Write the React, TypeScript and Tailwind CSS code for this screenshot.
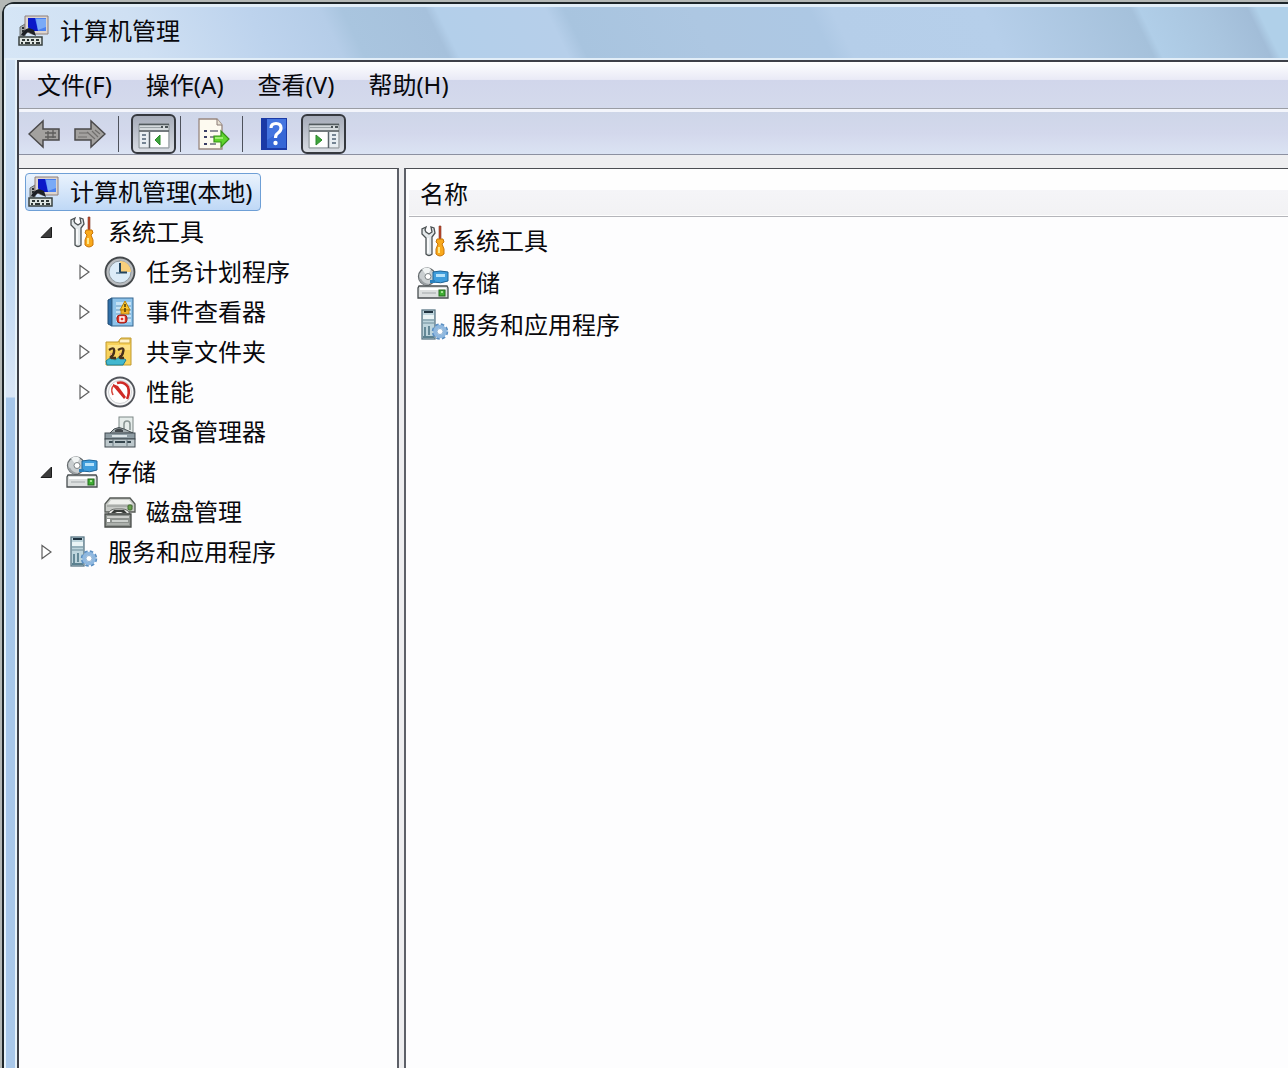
// Computer management console: menu bar, toolbar, console tree and result list.

import type { ComponentType, ReactNode } from 'react';

/* ---------- Icons ---------- */

function ComputerIcon() {
    return (
        <svg width="32" height="32" viewBox="0 0 32 32" aria-hidden="true">
            <path d="M2 12l5-3v12H2z" fill="#a9aeb0" stroke="#6d7274" />
            <path d="M7 1h23v18H14l-7-3z" fill="#ddd5cf" stroke="#8c7f7b" />
            <path d="M10 3h18v13H14l-4-3z" fill="#4a80f0" />
            <path d="M10 3h7l3 13h-6l-4-4z" fill="#0a18c8" />
            <path d="M18 4h10v8l-8 3z" fill="#86b4f8" opacity=".8" />
            <path d="M3 20c2-4 4-6 8-7l5 2 2 6-4-2-4-2-4 4z" fill="#1d2026" />
            <path d="M4 13h2M4 16h2" stroke="#2c3032" strokeWidth="2" />
            <rect x="1" y="22" width="23" height="8" fill="#dfe5e2" stroke="#38403f" strokeWidth="1.500" />
            <path d="M4 25h3m2 0h2m2 0h3m2 0h3M3 28h2m2 0h5m2 0h2m2 0h4" stroke="#2f3736" strokeWidth="1.800" />
        </svg>
    );
}

function ToolsIcon() {
    return (
        <svg width="32" height="32" viewBox="0 0 32 32" aria-hidden="true">
            <path d="M9 2L5 4v5l4 4v16q3 3 6 0V12l3-4-1-5-3-1 1 5-3 2-3-2-1-2z" fill="#e3e8ea" stroke="#4c5254" strokeWidth="1.300" />
            <path d="M11 13v15" stroke="#fff" strokeWidth="1.500" />
            <path d="M22 1h2v14h-2z" fill="#c4472a" stroke="#7b3a2a" strokeWidth=".6" />
            <path d="M20 14h6l1 3-2 2 2 5v5q-4 4-8 0v-5l2-5-2-2z" fill="#f9a91c" stroke="#c97608" />
            <path d="M22 22v6" stroke="#ffe98a" strokeWidth="2" />
        </svg>
    );
}

function ClockIcon() {
    return (
        <svg width="32" height="32" viewBox="0 0 32 32" aria-hidden="true">
            <circle cx="16" cy="16" r="14.500" fill="#b9bcbf" stroke="#45494c" strokeWidth="1.800" />
            <circle cx="16" cy="16" r="11" fill="#dcecf8" stroke="#8f989e" />
            <path d="M16 16V5a11 11 0 0 1 11 11z" fill="#f8cf7c" />
            <path d="M16 7v9.500h7" fill="none" stroke="#23445e" strokeWidth="2" />
            <path d="M12 17h4" stroke="#5d7f99" strokeWidth="1.500" />
        </svg>
    );
}

function EventIcon() {
    return (
        <svg width="32" height="32" viewBox="0 0 32 32" aria-hidden="true">
            <path d="M4 4l4-2v28l-4-2z" fill="#2f6fa8" stroke="#204a72" />
            <rect x="8" y="2" width="21" height="28" fill="#8ec3ea" stroke="#35668f" />
            <path d="M12 6h15v20H12z" fill="#c5e2f5" />
            <path d="M12 10h15m-15 4h15m-15 4h15m-15 4h15" stroke="#5f96c2" />
            <path d="M21 5l5 9H16z" fill="#fbc62d" stroke="#b57f08" />
            <path d="M17 14h8v4h-8z" fill="#f3b22a" stroke="#b57f08" strokeWidth=".8" />
            <path d="M21 8v3m0 1v4" stroke="#4b3904" strokeWidth="1.500" />
            <rect x="13" y="19" width="10" height="8" rx="3" fill="#e03427" stroke="#9f1b16" />
            <path d="M16 21h4v4h-4z" fill="#e03427" stroke="#fff" strokeWidth="1.400" />
        </svg>
    );
}

function SharedFolderIcon() {
    return (
        <svg width="32" height="32" viewBox="0 0 32 32" aria-hidden="true">
            <path d="M2 6h12l3-4h10v27H2z" fill="#f8d25b" stroke="#c09a31" />
            <path d="M16 3h10v4H15z" fill="#fff3cc" stroke="#cda73c" />
            <path d="M4 9h22v5H4z" fill="#fde388" />
            <path d="M2 25q5-5 9-1 5-5 11 0l-3 5H3z" fill="#42b8cf" stroke="#1e7f95" />
            <path d="M5 14q6-4 5 2 0 3-4 6m1 0h5M14 14q7-4 5 2 0 3-4 6m1 0h4" fill="none" stroke="#47301a" strokeWidth="2.400" />
            <path d="M6 18h2m7 0h2" stroke="#e9a877" strokeWidth="2" />
        </svg>
    );
}

function PerformanceIcon() {
    return (
        <svg width="32" height="32" viewBox="0 0 32 32" aria-hidden="true">
            <circle cx="16" cy="16" r="14.500" fill="#f7f7f8" stroke="#53565c" strokeWidth="1.800" />
            <circle cx="16" cy="16" r="11.500" fill="#fff" stroke="#cfd1d4" />
            <path d="M9 19q-3-6 1-10" fill="none" stroke="#d8493f" strokeWidth="1.600" />
            <path d="M9 8l5 2 8 11-2 2L9 10z" fill="#cf2a25" />
            <path d="M13 7q7-2 11 4 2 6-1 12" fill="none" stroke="#cf2a25" strokeWidth="2.600" />
        </svg>
    );
}

function DeviceIcon() {
    return (
        <svg width="32" height="32" viewBox="0 0 32 32" aria-hidden="true">
            <rect x="15" y="1" width="14" height="16" fill="#e5ecea" stroke="#7d8785" />
            <path d="M20 13V8q0-3 3-3t3 3v6" fill="none" stroke="#8b9795" strokeWidth="1.600" />
            <path d="M5 18l5-5q5-3 10 0l9 4z" fill="#a4adb0" stroke="#474f53" />
            <path d="M11 14q4-3 8 0v2h-8z" fill="#42484c" />
            <rect x="1" y="17" width="30" height="6" fill="#8f9da4" stroke="#414b50" />
            <rect x="1" y="23" width="30" height="8" fill="#bdc8cc" stroke="#414b50" />
            <path d="M8 20h15" stroke="#dde5e8" strokeWidth="2" />
            <path d="M5 26h4m14 0h4m-16 0h10" stroke="#37474f" strokeWidth="1.800" />
            <path d="M9 23v7m14-7v7" stroke="#6d7d84" />
        </svg>
    );
}

function StorageIcon() {
    return (
        <svg width="32" height="32" viewBox="0 0 32 32" aria-hidden="true">
            <circle cx="10" cy="9.500" r="8.500" fill="#c9ced0" stroke="#656b6e" strokeWidth="1.300" />
            <path d="M10 9.500L5 2q5-3 9 0z" fill="#f1f4f4" />
            <circle cx="11" cy="9.500" r="3" fill="#fff" stroke="#7b8284" />
            <path d="M3 12q3 6 9 6" fill="none" stroke="#9a9fa2" strokeWidth="2" />
            <path d="M16 5q7-2 15 0v9q-7 3-15 1z" fill="#3f9ddc" stroke="#1f6496" />
            <path d="M19 7h9v3h-9z" fill="#b6e2fa" />
            <path d="M13 13h5v3h-5z" fill="#2a80bd" />
            <path d="M2 19h28l1 2v10H1V21z" fill="#dcdfdf" stroke="#484e50" strokeWidth="1.300" />
            <path d="M3 22h26" stroke="#fff" strokeWidth="2" />
            <path d="M5 26h14" stroke="#a2a7a9" />
            <rect x="22" y="23" width="6" height="6" fill="#3fae34" stroke="#24681f" />
            <path d="M24 25h2" stroke="#c9f5b2" strokeWidth="1.500" />
        </svg>
    );
}

function DiskIcon() {
    return (
        <svg width="32" height="32" viewBox="0 0 32 32" aria-hidden="true">
            <path d="M6 2h20l5 6v8H1V8z" fill="#c7cac6" stroke="#555a56" strokeWidth="1.300" />
            <path d="M7 4h18l3 4H4z" fill="#eef0ec" />
            <path d="M3 10h26" stroke="#8b908c" />
            <path d="M4 18q2-5 8-5h6q6 0 8 5z" fill="#f0f1ee" stroke="#5c605d" />
            <path d="M7 17l3-3h10l3 3h-4l-2-1h-4l-2 1z" fill="#383c39" />
            <rect x="24" y="9" width="4" height="5" rx="1" fill="#67a04c" stroke="#41682f" />
            <path d="M1 18h26v13H1z" fill="#8d928e" stroke="#484c49" strokeWidth="1.300" />
            <path d="M3 21h22" stroke="#dcdedb" strokeWidth="1.600" />
            <path d="M3 28h22" stroke="#b4b8b4" strokeWidth="1.600" />
            <path d="M8 25h16" stroke="#e9ebe8" strokeWidth="1.400" />
            <path d="M3 23h3v3H3z" fill="#fff" />
        </svg>
    );
}

function ServicesIcon() {
    return (
        <svg width="32" height="32" viewBox="0 0 32 32" aria-hidden="true">
            <rect x="5" y="1" width="13" height="29" fill="#bed5dd" stroke="#5b7785" strokeWidth="1.300" />
            <path d="M7 3h9" stroke="#1f3340" strokeWidth="2" />
            <path d="M6 6h11v4H6z" fill="#eaf4f6" />
            <path d="M6 11h11M6 14h11" stroke="#6d8c9a" />
            <path d="M8 18v9m4-10v9m-6 2h11" stroke="#5b8190" strokeWidth="1.800" />
            <circle cx="23" cy="22.500" r="6.500" fill="none" stroke="#5b8fc2" strokeWidth="3.500" strokeDasharray="3.100 2" />
            <circle cx="23" cy="22.500" r="5" fill="#fff" stroke="#8fb8e0" strokeWidth="3.500" />
            <circle cx="23" cy="22.500" r="3" fill="#fff" stroke="#6f9ac4" strokeWidth=".8" />
        </svg>
    );
}

function ArrowIcon({ forward }: { forward?: boolean }) {
    return (
        <svg width="32" height="30" viewBox="0 0 32 30" className={forward ? '-scale-x-100' : ''} aria-hidden="true">
            <path d="M1 15L15 2v8h16v11H15v7z" fill="#a3a19f" stroke="#4b4a4b" strokeWidth="1.500" />
            {forward
                ? <path d="M6 15l5-4m-3 7l6-6m-3 8l8-7m0 5h9m-11-4h10" stroke="#706e6c" strokeWidth="1.200" />
                : <path d="M17 14h11m-11 4h11m-8-6v8m5-9v8" stroke="#5e5c5b" strokeWidth="1.300" />}
        </svg>
    );
}

function PaneIcon({ right }: { right?: boolean }) {
    return (
        <svg width="32" height="26" viewBox="0 0 32 26" aria-hidden="true">
            <path d="M1 1h30v24H1z" fill="#d5dadd" stroke="#8d9599" />
            <path d="M1 1.500h30M1 8h30" stroke="#525a5e" strokeWidth="1.300" />
            <path d="M2 4.500h21" stroke="#9aa2a6" />
            <path d="M23 4h2m2 0h3" stroke="#4b5357" strokeWidth="2" />
            {right ? (
                <>
                    <path d="M2 9h18v15H2z" fill="#fff" />
                    <path d="M21 9h9v15h-9z" fill="#e8eef2" />
                    <path d="M20.500 9v16" stroke="#59636a" strokeWidth="1.500" />
                    <path d="M24 12h4m-4 4h4m-4 4h4" stroke="#4d6274" strokeWidth="1.500" />
                    <path d="M8 12l6 5-6 5z" fill="#3fa53c" stroke="#2c8a2c" />
                </>
            ) : (
                <>
                    <path d="M12 9h18v15H12z" fill="#fff" />
                    <path d="M2 9h9v15H2z" fill="#e8eef2" />
                    <path d="M11.500 9v16" stroke="#59636a" strokeWidth="1.500" />
                    <path d="M4 12h4m-4 4h4m-4 4h4" stroke="#4d6274" strokeWidth="1.500" />
                    <path d="M22 12l-5 5 5 5z" fill="#3fa53c" stroke="#2c8a2c" />
                </>
            )}
        </svg>
    );
}

function ExportIcon() {
    return (
        <svg width="32" height="32" viewBox="0 0 32 32" aria-hidden="true">
            <path d="M1 1h18l5 6v24H1z" fill="#fdfaf0" stroke="#98877f" strokeWidth="1.300" />
            <path d="M19 1v6h5" fill="#e9e3d5" stroke="#8a7b74" />
            <path d="M6 13h3m-3 6h3m-3 7h3" stroke="#3b3f66" strokeWidth="2" />
            <path d="M12 13h8m-8 6h4m-4 7h6" stroke="#6b6e7e" strokeWidth="1.600" />
            <path d="M16 18h7v-5l8 8-8 8v-5h-7z" fill="#5fd42e" stroke="#379118" strokeWidth="1.200" />
            <path d="M17 20h8" stroke="#b5f58d" strokeWidth="1.500" />
        </svg>
    );
}

function HelpIcon() {
    return (
        <svg width="26" height="32" viewBox="0 0 26 32" aria-hidden="true">
            <path d="M0 0h26v32H0z" fill="#1b3aa6" />
            <path d="M6 1h19v29H6z" fill="#3566d6" />
            <path d="M6 1h19v9L6 22z" fill="#5c8cf0" opacity=".4" />
            <path d="M10 10q0-4.500 5-4.500t5 4.500q0 3-3 5-2.500 1.500-2.500 5" fill="none" stroke="#fff" strokeWidth="3.200" />
            <circle cx="14.500" cy="25" r="2.200" fill="#fff" />
        </svg>
    );
}

function Toggle({ open }: { open: boolean }) {
    return (
        <svg width="12" height="16" viewBox="0 0 12 16" aria-hidden="true">
            {open
                ? <path d="M11.500 3v10.500H1z" fill="#3d3d3d" stroke="#1c1c1c" />
                : <path d="M2 1.500v13L11 8z" fill="#fff" stroke="#5f5f5f" strokeWidth="1.200" />}
        </svg>
    );
}

/* ---------- Data ---------- */

interface TreeNode {
    label: string;
    icon: ComponentType;
    level: 1 | 2;
    open?: boolean;
}

const menus = ['文件(F)', '操作(A)', '查看(V)', '帮助(H)'];

const tree: TreeNode[] = [
    { label: '系统工具', icon: ToolsIcon, level: 1, open: true },
    { label: '任务计划程序', icon: ClockIcon, level: 2, open: false },
    { label: '事件查看器', icon: EventIcon, level: 2, open: false },
    { label: '共享文件夹', icon: SharedFolderIcon, level: 2, open: false },
    { label: '性能', icon: PerformanceIcon, level: 2, open: false },
    { label: '设备管理器', icon: DeviceIcon, level: 2 },
    { label: '存储', icon: StorageIcon, level: 1, open: true },
    { label: '磁盘管理', icon: DiskIcon, level: 2 },
    { label: '服务和应用程序', icon: ServicesIcon, level: 1, open: false },
];

const results = [
    { label: '系统工具', icon: ToolsIcon },
    { label: '存储', icon: StorageIcon },
    { label: '服务和应用程序', icon: ServicesIcon },
];

/* ---------- Parts ---------- */

function TitleBar() {
    return (
        <header className="flex h-14 items-center gap-2.5 rounded-tl-lg border-b-2 border-t-[3px] border-[#e2eef8] bg-[linear-gradient(64deg,#d6e6f6_0px,#cfe0f3_130px,#bdd3ed_240px,#b5cde8_305px,#a9c5df_325px,#a6c1dc_400px,#b3cfea_410px,#b6cfea_508px,#a8c4df_525px,#adc7e2_640px,#adc8e4_745px,#b5cee9_765px,#b6cfea_900px,#a5c1db_1034px,#b0cee8_1042px,#a9c5df_1100px,#a2bdd8_1139px,#b0d0e9_1148px)] pb-1 pl-3.5">
            <ComputerIcon />
            <h1 className="text-2xl">计算机管理</h1>
        </header>
    );
}

function Separator() {
    return <div className="ml-1 mr-2 h-9 w-px bg-[#4e525c]" />;
}

function PaneButton({ label, children }: { label: string; children: ReactNode }) {
    return (
        <button
            aria-label={label}
            aria-pressed="true"
            className="ml-1 flex h-10 w-[45px] items-center justify-center rounded-md border-2 border-[#35383e] bg-linear-to-b from-[#a5abb8] to-[#d9dde4] pt-1"
        >
            {children}
        </button>
    );
}

function Toolbar() {
    return (
        <div role="toolbar" className="flex h-[46px] items-center border-b border-t-[3px] border-b-[#8c90a0] border-t-[#f3f5fb] bg-linear-to-b from-[#ced6e8] via-[#d3d8ec] to-[#dbe3f3] pl-[5px] pt-px">
            <button aria-label="后退" className="mr-1.5 flex w-10 justify-center"><ArrowIcon /></button>
            <button aria-label="前进" className="mr-1 flex w-10 justify-center"><ArrowIcon forward /></button>
            <Separator />
            <PaneButton label="显示/隐藏控制台树"><PaneIcon /></PaneButton>
            <Separator />
            <button aria-label="导出列表" className="flex w-[49px] justify-center"><ExportIcon /></button>
            <Separator />
            <button aria-label="帮助" className="flex w-[46px] justify-center"><HelpIcon /></button>
            <PaneButton label="显示/隐藏操作窗格"><PaneIcon right /></PaneButton>
        </div>
    );
}

function ConsoleTree() {
    return (
        <nav className="w-[380px] shrink-0 border-r-2 border-t border-r-[#5d6068] border-t-[#4b4d52] bg-[#fdfdfe] pt-[3px]">
            <button className="my-px ml-1.5 flex h-[38px] items-center gap-2.5 rounded-sm border border-[#6e9fd6] bg-linear-to-b from-[#eaf3fd] to-[#bfd8f6] pl-0.5 pr-2">
                <ComputerIcon />
                计算机管理(本地)
            </button>
            <ul>
                {tree.map(({ label, icon: Icon, level, open }) => (
                    <li key={label}>
                        <button className={level === 1 ? 'flex h-10 items-center pl-[21px]' : 'flex h-10 items-center pl-[59px]'}>
                            <span className="mr-3.5 w-3">{open !== undefined && <Toggle open={open} />}</span>
                            <span className="mr-2.5"><Icon /></span>
                            {label}
                        </button>
                    </li>
                ))}
            </ul>
        </nav>
    );
}

function ResultPane() {
    return (
        <main className="min-w-0 flex-1 border-l-2 border-t border-l-[#5d6068] border-t-[#4b4d52] bg-[#fdfdfe] pl-[3px]">
            <table className="w-full text-left">
                <thead>
                    <tr className="h-[47px] border-b border-[#b4b5ba] bg-[linear-gradient(#fefefe_0_45%,#f5f5f8_45%,#f2f2f4)]">
                        <th className="pl-[11px] pt-1 font-normal">名称</th>
                    </tr>
                </thead>
                <tbody className="before:block before:h-[3px]">
                    {results.map(({ label, icon: Icon }) => (
                        <tr key={label} className="h-[42px]">
                            <td className="pl-2">
                                <button className="flex items-center gap-[3px]">
                                    <Icon />
                                    {label}
                                </button>
                            </td>
                        </tr>
                    ))}
                </tbody>
            </table>
        </main>
    );
}

export default function App() {
    return (
        <div className="flex min-h-screen overflow-hidden bg-[#b4b8b6] pl-0.5 pt-0.5 font-['Noto_Sans','Noto_Sans_CJK_SC',sans-serif] text-2xl leading-8 text-[#08080c]">
            <div className="flex min-w-0 flex-1 flex-col rounded-tl-xl border-l-2 border-t-2 border-[#1d2529] bg-[#d6e6f6]">
                <TitleBar />
                <div className="flex flex-1">
                    {/* Glass frame edge */}
                    <div className="w-[13px] shrink-0 border-x-2 border-x-[#e6f2fa] bg-[linear-gradient(#cfe0f3_0px,#bcd6f2_190px,#d9e6f6_337px,#a5c6ea_338px,#a9c8ea)]" />
                    <div className="flex min-w-0 flex-1 flex-col border-l-2 border-t-2 border-[#3d4048] bg-[#eeeef0]">
                        <div role="menubar" className="flex h-[47px] items-center gap-0.5 border-b border-[#9a9da4] bg-[linear-gradient(#fefefe_0%,#e9eaf6_38%,#d1d6eb_39%,#d4daec)] pl-0.5">
                            {menus.map(label => (
                                <button key={label} role="menuitem" className="px-4">{label}</button>
                            ))}
                        </div>
                        <Toolbar />
                        <div className="mt-[13px] flex flex-1 gap-[5px]">
                            <ConsoleTree />
                            <ResultPane />
                        </div>
                    </div>
                </div>
            </div>
        </div>
    );
}
